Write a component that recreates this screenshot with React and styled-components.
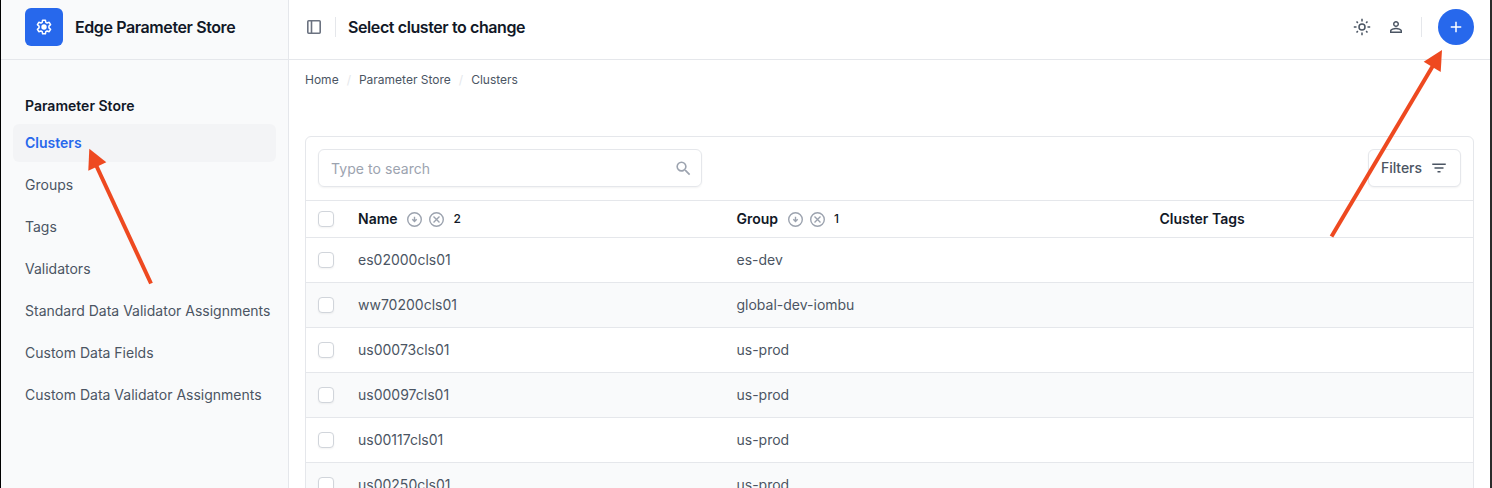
import React from "react";
import styled, { createGlobalStyle } from "styled-components";
import {
  MdPersonOutline,
  MdAdd,
  MdSearch,
  MdFilterList,
} from "react-icons/md";

const line = "#e5e7eb";
const ink = "#111827";
const body = "#4b5563";
const muted = "#9ca3af";
const blue = "#2768ec";
const subtle = "#f9fafb";

const GlobalStyle = createGlobalStyle`
  *, *::before, *::after { box-sizing: border-box; }
  html, body { margin: 0; height: 100%; overflow: hidden; }
  body {
    font-family: Inter, "Liberation Sans", sans-serif;
    font-size: 14px;
    line-height: 20px;
    color: ${body};
    background: #fff;
    -webkit-font-smoothing: antialiased;
  }
  svg { display: block; flex: none; }
`;

const Frame = styled.div`
  position: relative;
  display: flex;
  height: 488px;
  overflow: hidden;
  border-left: 1px solid #000;
  border-right: 2px solid #2b2b2b;
`;

const Sidebar = styled.aside`
  width: 288px;
  flex: none;
  background: ${subtle};
  border-right: 1px solid ${line};
`;

const Brand = styled.div`
  display: flex;
  align-items: center;
  gap: 12px;
  height: 60px;
  padding: 0 24px 5px;
  border-bottom: 1px solid ${line};
`;

const Logo = styled.div`
  display: grid;
  place-items: center;
  width: 38px;
  height: 38px;
  border-radius: 6px;
  background: ${blue};
  color: #fff;
`;

const Title = styled.h1`
  margin: 0;
  font-size: 16px;
  font-weight: 600;
  line-height: 24px;
  letter-spacing: -0.4px;
  color: ${ink};
  white-space: nowrap;
`;

const Nav = styled.nav`
  display: flex;
  flex-direction: column;
  gap: 4px;
  padding: 36px 12px 0;
`;

const NavHeading = styled.h2`
  margin: 0 0 4px;
  padding: 0 12px;
  font-size: 14px;
  font-weight: 600;
  line-height: 20px;
  color: ${ink};
`;

const NavItem = styled.a`
  display: flex;
  align-items: center;
  height: 38px;
  padding: 0 12px;
  border-radius: 6px;
  white-space: nowrap;
  font-weight: ${(p) => (p.$active ? 600 : 400)};
  color: ${(p) => (p.$active ? blue : body)};
  background: ${(p) => (p.$active ? "#f3f4f6" : "transparent")};
`;

const Main = styled.main`
  flex: 1;
  min-width: 0;
`;

const Header = styled.header`
  display: flex;
  align-items: center;
  height: 60px;
  padding: 0 16px 5px 16px;
  border-bottom: 1px solid ${line};
`;

const Divider = styled.span`
  width: 1px;
  height: 20px;
  margin: ${(p) => p.$margin};
  background: ${line};
`;

const Actions = styled.div`
  display: flex;
  align-items: center;
  gap: 16px;
  margin-left: auto;
`;

const AddButton = styled.button`
  display: grid;
  place-items: center;
  width: 36px;
  height: 36px;
  padding: 0;
  border: 0;
  border-radius: 50%;
  background: ${blue};
  color: #fff;
`;

const Breadcrumbs = styled.div`
  display: flex;
  gap: 8px;
  padding: 12px 16px 0;
  font-size: 12px;
  line-height: 16px;
`;

const Slash = styled.span`
  color: ${line};
`;

const Panel = styled.section`
  margin: 48px 16px 0;
  height: 420px;
  border: 1px solid ${line};
  border-radius: 6px;
`;

const Toolbar = styled.div`
  display: flex;
  justify-content: space-between;
  padding: 12px 12px 13px;
`;

const SearchBox = styled.div`
  display: flex;
  align-items: center;
  justify-content: space-between;
  width: 384px;
  height: 38px;
  padding: 0 8px 0 12px;
  border: 1px solid ${line};
  border-radius: 6px;
  box-shadow: 0 1px 2px rgba(0, 0, 0, 0.05);
  color: ${muted};
`;

const Placeholder = styled.span`
  padding-top: 2px;
  letter-spacing: 0.06px;
`;

const FilterButton = styled.button`
  display: flex;
  align-items: center;
  gap: 8px;
  width: 93px;
  height: 38px;
  padding: 0 12px;
  border: 1px solid ${line};
  border-radius: 6px;
  box-shadow: 0 1px 2px rgba(0, 0, 0, 0.05);
  background: #fff;
  font: 500 14px/20px Inter, "Liberation Sans", sans-serif;
  letter-spacing: -0.05px;
  color: ${body};
`;

const Row = styled.div`
  display: grid;
  grid-template-columns: 40px 378.5px 423px 1fr;
  align-items: center;
  height: ${(p) => (p.$head ? "37px" : "45px")};
  padding: 0 12px;
  border-top: 1px solid ${line};
  background: ${(p) => (p.$striped ? subtle : "transparent")};
`;

const Checkbox = styled.span`
  width: 16px;
  height: 16px;
  border: 1px solid #d1d5db;
  border-radius: 4px;
  background: #fff;
  box-shadow: 0 1px 2px rgba(0, 0, 0, 0.05);
`;

const HeadCell = styled.div`
  display: flex;
  align-items: center;
  font-weight: 600;
  color: ${ink};
`;

const SortTools = styled.span`
  display: flex;
  align-items: center;
  gap: 7px;
  margin-left: 9.5px;
  color: ${muted};
`;

const SortOrder = styled.span`
  margin-left: 9.5px;
  font-size: 12px;
  font-weight: 500;
`;

const Annotations = styled.svg`
  position: absolute;
  top: 0;
  left: -1px;
  pointer-events: none;
`;

const GearIcon = () => (
  <svg width="18" height="18" viewBox="0 0 24 24" fill="none" stroke="currentColor" strokeWidth="2" strokeLinejoin="round">
    <path d="M10.1 2.9h3.8l.5 2.8 1.7 1 2.8-1 1.9 3.200-2.200 1.900v2.400l2.200 1.900-1.900 3.200-2.800-1-1.700 1-.500 2.800h-3.800l-.500-2.800-1.700-1-2.800 1-1.900-3.200 2.200-1.900v-2.400L3.200 8.900l1.900-3.200 2.800 1 1.700-1z" />
    <circle cx="12" cy="12" r="3.6" fill="currentColor" stroke="none" />
  </svg>
);

const SunIcon = () => (
  <svg width="18" height="18" viewBox="0 0 18 18" fill="none" stroke="currentColor" strokeWidth="1.5">
    <circle cx="9" cy="9" r="3" />
    <path d="M9 .8v2.700M9 14.500v2.700M.8 9h2.700M14.500 9h2.700M3.500 3.500l1.400 1.400M13.100 13.100l1.400 1.400M3.500 14.500l1.400-1.400M13.100 4.900l1.400-1.400" />
  </svg>
);

const SidebarIcon = () => (
  <svg width="18" height="18" viewBox="0 0 18 18" fill="none" stroke="#6b7280" strokeWidth="1.6">
    <rect x="2.8" y="2.8" width="12.4" height="12.4" rx="0.9" />
    <path d="M6.5 3v12" />
  </svg>
);

const SortDown = () => (
  <svg width="15" height="15" viewBox="0 0 15 15" fill="none" stroke="currentColor" strokeWidth="1.4">
    <circle cx="7.5" cy="7.5" r="6.8" />
    <path d="M7.5 4.8v4.5M5.3 7.3l2.2 2.200 2.200-2.200" />
  </svg>
);

const SortRemove = () => (
  <svg width="15" height="15" viewBox="0 0 15 15" fill="none" stroke="currentColor" strokeWidth="1.4">
    <circle cx="7.5" cy="7.5" r="6.8" />
    <path d="M4.5 4.5l6 6M10.5 4.5l-6 6" />
  </svg>
);

const SortableHead = ({ label, order }) => (
  <HeadCell>
    {label}
    <SortTools>
      <SortDown />
      <SortRemove />
    </SortTools>
    <SortOrder>{order}</SortOrder>
  </HeadCell>
);

const navItems = [
  "Clusters",
  "Groups",
  "Tags",
  "Validators",
  "Standard Data Validator Assignments",
  "Custom Data Fields",
  "Custom Data Validator Assignments",
];

const clusters = [
  ["es02000cls01", "es-dev"],
  ["ww70200cls01", "global-dev-iombu"],
  ["us00073cls01", "us-prod"],
  ["us00097cls01", "us-prod"],
  ["us00117cls01", "us-prod"],
  ["us00250cls01", "us-prod"],
];

export default function App() {
  return (
    <>
      <GlobalStyle />
      <Frame>
        <Sidebar>
          <Brand>
            <Logo>
              <GearIcon />
            </Logo>
            <Title>Edge Parameter Store</Title>
          </Brand>
          <Nav>
            <NavHeading>Parameter Store</NavHeading>
            {navItems.map((item, i) => (
              <NavItem key={item} $active={i === 0}>
                {item}
              </NavItem>
            ))}
          </Nav>
        </Sidebar>
        <Main>
          <Header>
            <SidebarIcon />
            <Divider $margin="0 12px" />
            <Title>Select cluster to change</Title>
            <Actions>
              <SunIcon />
              <MdPersonOutline size={18} />
              <Divider $margin="0" />
              <AddButton>
                <MdAdd size={18} />
              </AddButton>
            </Actions>
          </Header>
          <Breadcrumbs>
            <span>Home</span>
            <Slash>/</Slash>
            <span>Parameter Store</span>
            <Slash>/</Slash>
            <span>Clusters</span>
          </Breadcrumbs>
          <Panel>
            <Toolbar>
              <SearchBox>
                <Placeholder>Type to search</Placeholder>
                <MdSearch size={19} />
              </SearchBox>
              <FilterButton>
                Filters
                <MdFilterList size={18} />
              </FilterButton>
            </Toolbar>
            <Row $head>
              <Checkbox />
              <SortableHead label="Name" order="2" />
              <SortableHead label="Group" order="1" />
              <HeadCell>Cluster Tags</HeadCell>
            </Row>
            {clusters.map(([name, group], i) => (
              <Row key={name} $striped={i % 2 === 1}>
                <Checkbox />
                <span>{name}</span>
                <span>{group}</span>
              </Row>
            ))}
          </Panel>
        </Main>
        <Annotations width="1492" height="488" viewBox="0 0 1492 488">
          <g stroke="#ee4920" strokeWidth="4" fill="none">
            <path d="M151 283.5 96 165" />
            <path d="M1331.5 236.5 1434 64" />
          </g>
          <g fill="#ee4920">
            <path d="M89.3 148.7 106.3 162.3 88.3 170.8z" />
            <path d="M1442 50 1440.7 72 1423.7 61.7z" />
          </g>
        </Annotations>
      </Frame>
    </>
  );
}
